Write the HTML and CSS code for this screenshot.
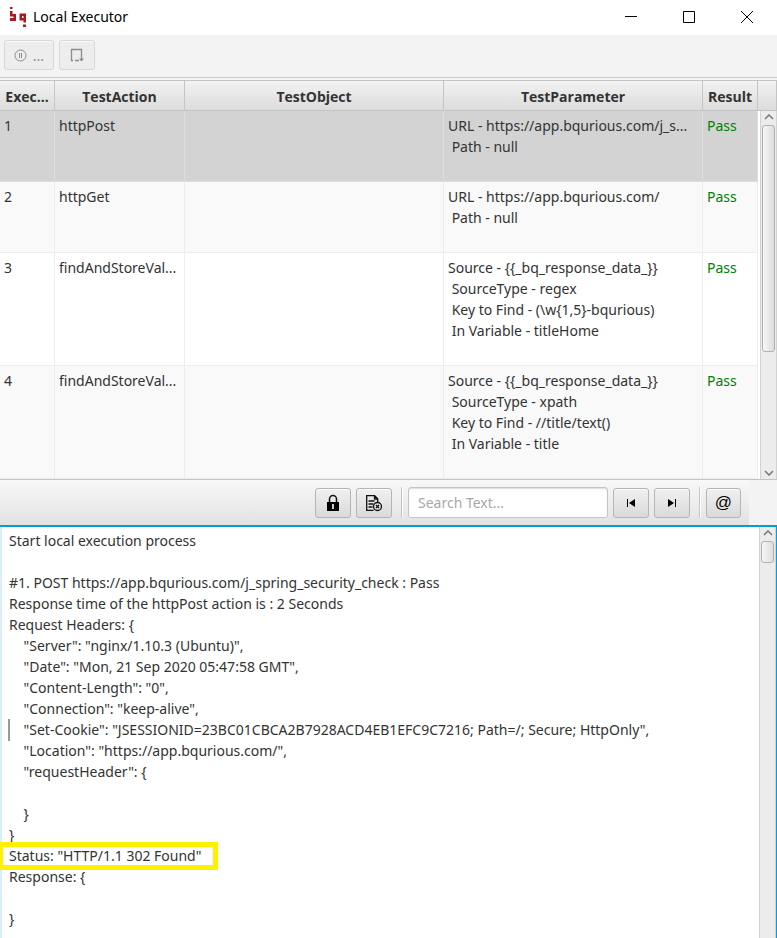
FILE: index.html
```
<!DOCTYPE html>
<html lang="en">
<head>
  <meta charset="UTF-8">
  <meta name="viewport" content="width=device-width, initial-scale=1.0">
  <title>Local Executor</title>
  <link rel="stylesheet" href="styles.css">
</head>
<body>
  <header class="titlebar">
    <svg class="logo" width="18" height="22" viewBox="0 0 18 22" fill="#a61c20">
      <path d="M1 1h2.500v2H1zM1 5h2.500v3H7v7H1v-3h3.500v-1.500H1zM10.500 7.500H17v9h-2.500V10H13v2h1.500v2.500h-4zM14 18.500h3V21h-3z"/>
    </svg>
    <h1>Local Executor</h1>
    <div class="window-buttons">
      <button aria-label="Minimize"><svg width="14" height="14"><path d="M1 6.500h12"/></svg></button>
      <button aria-label="Maximize"><svg width="14" height="14"><path d="M1.500 1.500h11v11h-11z"/></svg></button>
      <button aria-label="Close"><svg width="14" height="14"><path d="M1 1l12 12M13 1L1 13"/></svg></button>
    </div>
  </header>

  <div class="toolbar">
    <button class="btn btn-pause" disabled>
      <svg width="13" height="13" viewBox="0 0 13 13" fill="none" stroke="currentColor"><circle cx="6.500" cy="6.500" r="5.500"/><path d="M5.500 4v5M7.500 4v5"/></svg>
      <span>...</span>
    </button>
    <button class="btn" aria-label="Step" disabled>
      <svg width="14" height="14" viewBox="0 0 14 14" fill="none" stroke="currentColor" stroke-width="1.300"><path d="M3 12.500H1.500v-11h10v11M5 12.500h4"/><path d="M9 10.500h5l-2.500 3z" fill="currentColor" stroke="none"/></svg>
    </button>
  </div>

  <section class="steps">
    <table>
      <colgroup>
        <col class="col-exec"><col class="col-action"><col><col><col class="col-result">
      </colgroup>
      <thead>
        <tr><th>Exec...</th><th>TestAction</th><th>TestObject</th><th>TestParameter</th><th>Result</th></tr>
      </thead>
      <tbody>
        <tr class="selected">
          <td>1</td><td>httpPost</td><td></td>
          <td><div>URL - https://app.bqurious.com/j_s...</div><div> Path - null</div></td>
          <td class="pass">Pass</td>
        </tr>
        <tr>
          <td>2</td><td>httpGet</td><td></td>
          <td><div>URL - https://app.bqurious.com/</div><div> Path - null</div></td>
          <td class="pass">Pass</td>
        </tr>
        <tr>
          <td>3</td><td>findAndStoreVal...</td><td></td>
          <td><div>Source - {{_bq_response_data_}}</div><div> SourceType - regex</div><div> Key to Find - (\w{1,5}-bqurious)</div><div> In Variable - titleHome</div></td>
          <td class="pass">Pass</td>
        </tr>
        <tr>
          <td>4</td><td>findAndStoreVal...</td><td></td>
          <td><div>Source - {{_bq_response_data_}}</div><div> SourceType - xpath</div><div> Key to Find - //title/text()</div><div> In Variable - title</div></td>
          <td class="pass">Pass</td>
        </tr>
      </tbody>
    </table>
    <div class="side">
      <div class="side-head"></div>
      <div class="scrollbar">
        <svg width="10" height="6" viewBox="0 0 10 6"><path d="M1 5l4-4 4 4"/></svg>
        <div class="thumb thumb-steps"></div>
        <svg class="down" width="10" height="6" viewBox="0 0 10 6"><path d="M1 1l4 4 4-4"/></svg>
      </div>
    </div>
  </section>

  <div class="log-tools">
    <div class="log-tools-bar">
      <button class="btn" aria-label="Lock scroll">
        <svg width="14" height="18" viewBox="0 0 14 18"><path d="M3.500 8V5a3.500 3.500 0 0 1 7 0v3" fill="none" stroke="#111" stroke-width="1.500"/><path d="M1 8h12v9H1z"/><path d="M6 10h2v5H6z" fill="#ccc"/></svg>
      </button>
      <button class="btn" aria-label="Clear log">
        <svg width="18" height="18" viewBox="0 0 18 18" fill="none" stroke="#111" stroke-width="1.300"><path d="M8.500 16.300H1.700V1.700h8l3 3V8M9.500 2v3h3M3.500 7h6M3.500 10h5M3.500 13h4"/><circle cx="12.500" cy="12.500" r="4"/><path d="M11 11l3 3M14 11l-3 3"/></svg>
      </button>
      <span class="separator"></span>
      <input class="search" type="text" placeholder="Search Text..." aria-label="Search text">
      <button class="btn" aria-label="Previous match">
        <svg width="10" height="10" viewBox="0 0 10 10"><path d="M1 1h1v8H1zM9 1v8L3 5z"/></svg>
      </button>
      <button class="btn" aria-label="Next match">
        <svg width="10" height="10" viewBox="0 0 10 10"><path d="M8 1h1v8H8zM1 1v8l6-4z"/></svg>
      </button>
      <span class="separator"></span>
      <button class="btn btn-at">@</button>
    </div>
  </div>

  <section class="log">
    <textarea class="log-text" aria-label="Execution log" spellcheck="false" readonly>
Start local execution process

#1. POST https://app.bqurious.com/j_spring_security_check : Pass
Response time of the httpPost action is : 2 Seconds
Request Headers: {
    "Server": "nginx/1.10.3 (Ubuntu)",
    "Date": "Mon, 21 Sep 2020 05:47:58 GMT",
    "Content-Length": "0",
    "Connection": "keep-alive",
    "Set-Cookie": "JSESSIONID=23BC01CBCA2B7928ACD4EB1EFC9C7216; Path=/; Secure; HttpOnly",
    "Location": "https://app.bqurious.com/",
    "requestHeader": {

    }
}
Status: "HTTP/1.1 302 Found"
Response: {

}</textarea>
    <div class="scrollbar">
      <svg width="10" height="6" viewBox="0 0 10 6"><path d="M1 5l4-4 4 4"/></svg>
      <div class="thumb thumb-log"></div>
    </div>
    <span class="caret"></span>
    <span class="highlight"></span>
  </section>
</body>
</html>
```
FILE: styles.css
```
:root {
  --line: #c4c4c4;
  --accent: #039ed3;
  --row: 21px;
}

* { box-sizing: border-box; }

body {
  margin: 0;
  height: 100vh;
  display: flex;
  flex-direction: column;
  background: #f3f3f3;
  color: #333;
  font: 14px/var(--row) "Noto Sans", "Open Sans", sans-serif;
}

button, input, textarea { font: inherit; color: inherit; }

/* Title bar */
.titlebar { display: flex; align-items: center; height: 35px; padding: 0 1px 2px 9px; background: #fff; color: #000; }
.titlebar h1 { flex: 1; margin: 0 0 0 6px; font-size: 14px; font-weight: 400; }
.window-buttons { display: flex; }
.window-buttons button { width: 58px; height: 32px; padding: 0; border: 0; background: none; }
.window-buttons svg { display: block; margin: auto; fill: none; stroke: #000; }

/* Buttons */
.btn {
  display: flex;
  justify-content: center;
  align-items: center;
  gap: 6px;
  width: 36px;
  height: 30px;
  padding: 0;
  border: 1px solid #b5b5b5;
  border-radius: 3px;
  background: linear-gradient(#f0f0f0, #dadada);
  box-shadow: inset 0 1px #fafafa;
  color: #000;
}
.btn:disabled { border-color: #d8d8d8; background: #ededed; color: #8c8c8c; }
.btn-pause { width: 50px; }

.toolbar { display: flex; gap: 5px; height: 43px; padding: 5px 4px; border-bottom: 1px solid #ccc; }

/* Steps table */
.steps { display: flex; margin-top: 2px; border-top: 1px solid var(--line); border-bottom: 1px solid var(--line); background: #fff; }
table { flex: 1; width: 0; table-layout: fixed; border-collapse: separate; border-spacing: 0; }
.col-exec, .col-result { width: 55px; }
.col-action { width: 130px; }
th {
  height: 30px;
  padding: 2px 0 0;
  border-right: 1px solid var(--line);
  border-bottom: 1px solid var(--line);
  background: linear-gradient(#f2f2f2, #dcdcdc);
  font-family: "Open Sans", sans-serif;
  font-weight: 700;
  white-space: nowrap;
}
td {
  padding: 4px 4px 24px;
  border-right: 1px solid #ededed;
  border-bottom: 1px solid #ededed;
  vertical-align: top;
  white-space: pre;
  overflow: hidden;
}
tbody tr:nth-child(even) { background: #f9f9f9; }
tbody tr.selected { background: #d3d3d3; }
tr.selected td { border-color: #dedede; }
.pass { color: #008000; }

.side { display: flex; flex-direction: column; width: 19px; }
.side-head { height: 30px; border-right: 1px solid var(--line); border-bottom: 1px solid var(--line); background: linear-gradient(#f2f2f2, #dcdcdc); }

/* Scrollbars */
.scrollbar { flex: 1; display: flex; flex-direction: column; align-items: center; gap: 5px; padding: 3px 0; border: 1px solid #d2d2d2; border-width: 0 1px; background: #ececec; }
.side .scrollbar { margin-left: 2px; }
.scrollbar svg { flex: none; fill: none; stroke: #777; stroke-width: 1.5; }
.scrollbar .down { margin-top: auto; }
.thumb { width: 13px; border: 1px solid #b0b0b0; border-radius: 3px; background: linear-gradient(90deg, #f6f6f6, #dedede); }
.thumb-steps { height: 227px; }
.thumb-log { height: 22px; }

/* Log toolbar */
.log-tools { padding-right: 28px; }
.log-tools-bar { display: flex; justify-content: flex-end; align-items: center; gap: 5px; height: 45px; padding-right: 8px; background: linear-gradient(#f8f8f8, #e2e2e2); }
.separator { width: 2px; height: 31px; margin-left: 4px; border-left: 1px solid #c4c4c4; border-right: 1px solid #fff; }
.search { width: 200px; height: 31px; padding: 0 9px; border: 1px solid #c4c4c4; border-radius: 3px; box-shadow: inset 0 1px 1px #ddd; background: #fff; }
.search::placeholder { color: #a8a8a8; }
.btn-at { width: 35px; font: 17px "Liberation Sans", sans-serif; }

/* Log */
.log { position: relative; flex: 1; display: flex; min-height: 0; border: 1px solid var(--accent); border-width: 2px 1px 0 0; background: #fff; }
.log-text { flex: 1; min-width: 0; padding: 3px 7px; border: 0; border-left: 2px solid #d9effa; outline: 0; resize: none; overflow: hidden; background: none; white-space: pre; }
.log .scrollbar { flex: none; width: 17px; }
.caret { position: absolute; top: 192px; left: 8px; width: 2px; height: 22px; background: #999; }
.highlight { position: absolute; top: 315px; left: 0; width: 218px; height: 28px; border: 5px solid #fff200; border-left-width: 3px; }
```
